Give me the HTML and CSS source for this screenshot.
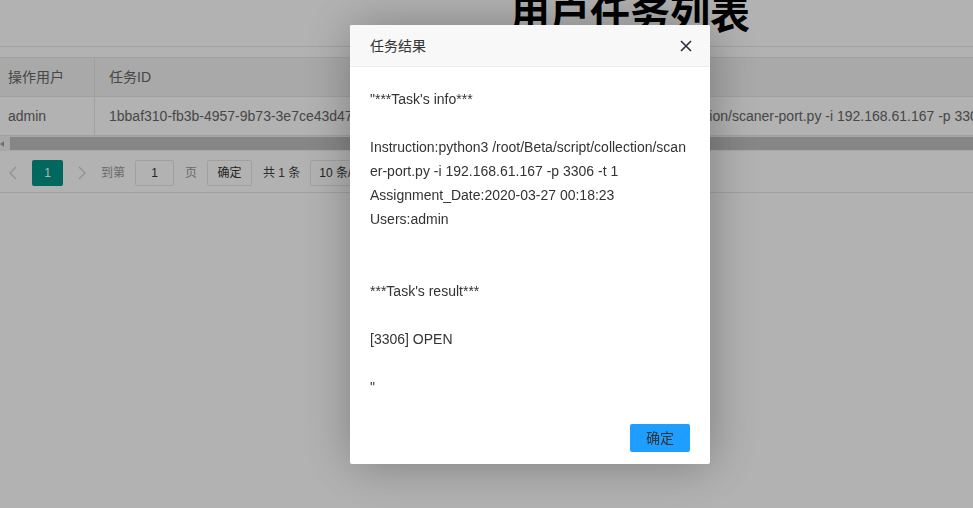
FILE: index.html
```html
<!DOCTYPE html>
<html lang="zh-CN">
<head>
<meta charset="utf-8">
<title>用户任务列表</title>
<link rel="stylesheet" href="styles.css">
</head>
<body>
<div class="page">
  <header class="title-bar"><h1 class="page-title">用户任务列表</h1></header>
  <div class="table-view">
    <div class="trow thead">
      <div class="cell c1">操作用户</div>
      <div class="cell c2">任务ID</div>
      <div class="cell c3">任务指令</div>
    </div>
    <div class="trow">
      <div class="cell c1">admin</div>
      <div class="cell c2">1bbaf310-fb3b-4957-9b73-3e7ce43d4712</div>
      <div class="cell c3">python3 /root/Beta/script/collection/scaner-port.py -i 192.168.61.167 -p 3306 -t 1</div>
    </div>
    <div class="hscroll"><span class="hs-arrow"></span><span class="hs-thumb"></span></div>
    <div class="pager">
      <span class="pg-prev"><svg width="10" height="14" viewBox="0 0 10 14"><polyline points="8,1 2,7 8,13" fill="none" stroke="#d2d2d2" stroke-width="1.4"/></svg></span>
      <span class="pg-curr">1</span>
      <span class="pg-next"><svg width="10" height="14" viewBox="0 0 10 14"><polyline points="2,1 8,7 2,13" fill="none" stroke="#d2d2d2" stroke-width="1.4"/></svg></span>
      <span class="pg-skip">到第</span>
      <span class="pg-input">1</span>
      <span class="pg-skip pg-unit">页</span>
      <span class="pg-btn">确定</span>
      <span class="pg-count">共 1 条</span>
      <span class="pg-limit">10 条/页</span>
    </div>
  </div>
</div>
<div class="shade"></div>
<div class="layer">
  <div class="layer-title">任务结果<span class="layer-close"><svg width="12" height="12" viewBox="0 0 12 12"><path d="M1 1 L11 11 M11 1 L1 11" stroke="#2e2e3a" stroke-width="1.6" fill="none"/></svg></span></div>
  <div class="layer-content">"***Task's info***

Instruction:python3 /root/Beta/script/collection/scaner-port.py -i 192.168.61.167 -p 3306 -t 1
Assignment_Date:2020-03-27 00:18:23
Users:admin


***Task's result***

[3306] OPEN

"</div>
  <div class="layer-btn"><span class="layer-btn0">确定</span></div>
</div>
</body>
</html>
```
FILE: styles.css
```css
html, body {
  margin: 0;
  padding: 0;
}
body {
  background: #fff;
  font-family: "Liberation Sans", "Noto Sans CJK SC", sans-serif;
  font-size: 14px;
  color: #666;
  overflow: hidden;
  width: 973px;
  height: 508px;
}
.title-bar {
  height: 46px;
  border-bottom: 1px solid #e6e6e6;
  overflow: hidden;
  padding-left: 510px;
}
.page-title {
  margin: -8px 0 0;
  font-family: "Noto Sans CJK SC", sans-serif;
  font-size: 40px;
  line-height: 40px;
  font-weight: bold;
  color: #000;
  white-space: nowrap;
}
.table-view {
  margin-top: 10px;
  border-top: 1px solid #e6e6e6;
  border-bottom: 1px solid #e6e6e6;
  overflow: hidden;
  white-space: nowrap;
}
.trow {
  display: grid;
  grid-template-columns: 95px 404px 700px;
  height: 38px;
  border-bottom: 1px solid #e6e6e6;
}
.thead {
  background: #f2f2f2;
}
.cell {
  display: flex;
  align-items: center;
  padding: 0 15px;
  line-height: 20px;
  border-right: 1px solid #e6e6e6;
  overflow: hidden;
}
.cell.c1 {
  padding-left: 8px;
}
.cell.c2 {
  padding-left: 14px;
}
.hscroll {
  height: 15px;
  background: #f1f1f1;
  display: flex;
  align-items: center;
}
.hs-arrow {
  width: 0;
  height: 0;
  border-top: 3px solid transparent;
  border-bottom: 3px solid transparent;
  border-right: 4px solid #a3a3a3;
  margin-left: 0;
}
.hs-thumb {
  flex: 1;
  height: 13px;
  margin-left: 6px;
  background: #c1c1c1;
}
.pager {
  height: 41px;
  box-sizing: border-box;
  padding-top: 9px;
  display: flex;
  align-items: flex-start;
  font-size: 12px;
}
.pager > span {
  height: 26px;
  line-height: 26px;
  box-sizing: border-box;
  flex: none;
}
.pg-prev {
  margin-left: 8px;
  width: 10px;
  display: flex;
  align-items: center;
}
.pg-curr {
  margin-left: 14px;
  width: 31px;
  text-align: center;
  background: #009688;
  color: #fff;
  border-radius: 2px;
}
.pg-next {
  margin-left: 14px;
  width: 10px;
  display: flex;
  align-items: center;
}
.pg-skip {
  margin-left: 14px;
  color: #999;
  width: 24px;
}
.pg-unit {
  margin-left: 11px;
  width: 12px;
}
.pg-input {
  margin-left: 10px;
  width: 39px;
  border: 1px solid #e6e6e6;
  border-radius: 2px;
  text-align: center;
  color: #333;
  line-height: 24px !important;
}
.pg-btn {
  margin-left: 10px;
  width: 45px;
  border: 1px solid #e6e6e6;
  border-radius: 2px;
  text-align: center;
  color: #333;
  line-height: 24px !important;
  background: #fff;
}
.pg-count {
  margin-left: 11px;
  color: #444;
}
.pg-limit {
  margin-left: 10px;
  width: 100px;
  border: 1px solid #e6e6e6;
  border-radius: 2px;
  padding-left: 8px;
  color: #333;
  line-height: 24px !important;
}
.shade {
  position: fixed;
  left: 0;
  top: 0;
  right: 0;
  bottom: 0;
  background: rgba(0, 0, 0, 0.3);
}
.layer {
  position: fixed;
  left: 350px;
  top: 25px;
  width: 360px;
  background: #fff;
  border-radius: 2px;
  box-shadow: 1px 1px 50px rgba(0, 0, 0, 0.3);
}
.layer-title {
  position: relative;
  height: 41px;
  line-height: 42px;
  padding: 0 80px 0 20px;
  border-bottom: 1px solid #eee;
  background: #f8f8f8;
  border-radius: 2px 2px 0 0;
  color: #333;
  font-size: 14px;
}
.layer-close {
  position: absolute;
  right: 18px;
  top: 15px;
  width: 12px;
  height: 12px;
  line-height: 0;
}
.layer-content {
  padding: 20px;
  line-height: 24px;
  font-size: 14px;
  color: #333;
  white-space: pre-wrap;
  word-break: break-all;
}
.layer-btn {
  text-align: right;
  padding: 0 15px 12px;
}
.layer-btn0 {
  display: inline-block;
  height: 28px;
  line-height: 28px;
  margin: 5px 5px 0;
  padding: 0 16px;
  background: #1e9fff;
  color: #333;
  border-radius: 2px;
  font-size: 14px;
}
```
